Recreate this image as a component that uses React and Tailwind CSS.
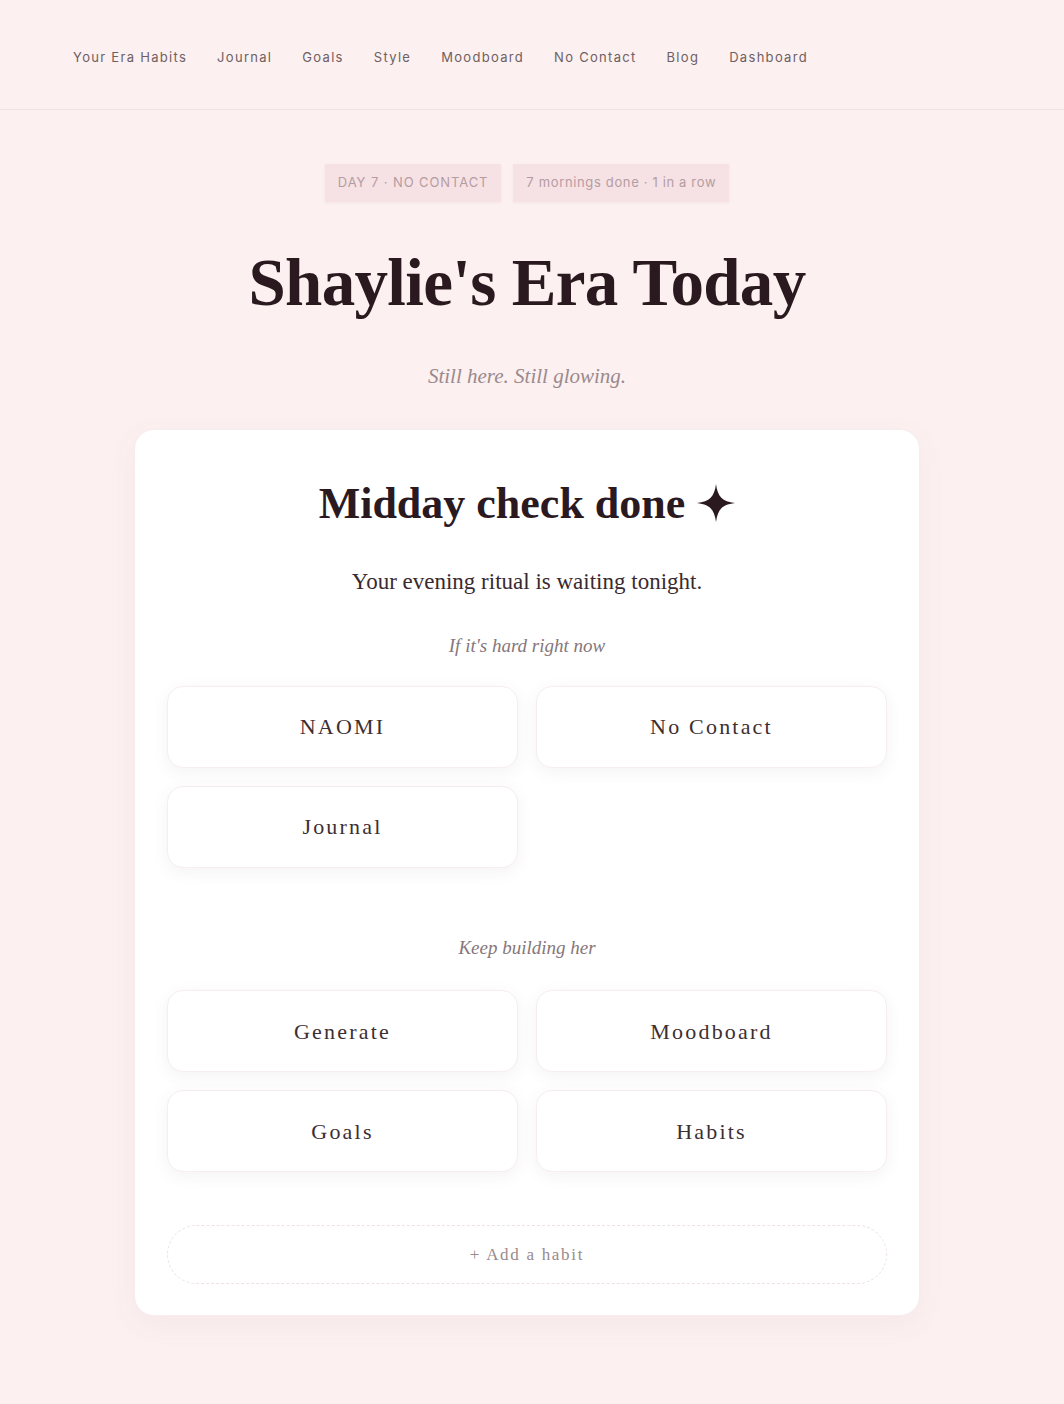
import React from 'react';

const navLinks = ['Your Era Habits', 'Journal', 'Goals', 'Style', 'Moodboard', 'No Contact', 'Blog', 'Dashboard'];

const hardNow = ['NAOMI', 'No Contact', 'Journal'];
const keepBuilding = ['Generate', 'Moodboard', 'Goals', 'Habits'];

const serif = "font-['Liberation_Serif',serif]";

const Sparkle = () => (
  <svg viewBox="0 0 24 24" className="inline-block w-[38px] h-[38px] ml-3 -mt-2 align-middle" fill="#2a1a1f">
    <path d="M12 0 C13 8 16 11 24 12 C16 13 13 16 12 24 C11 16 8 13 0 12 C8 11 11 8 12 0 Z" />
  </svg>
);

const Tile = ({ label }) => (
  <button
    className={`h-[82px] w-full rounded-2xl bg-white border border-[#f6eeee] shadow-[0_4px_16px_rgba(120,80,80,0.07)] text-[22px] tracking-[0.1em] text-[#3d2e32] ${serif}`}
  >
    {label}
  </button>
);

const SectionLabel = ({ children }) => (
  <p className={`text-center italic text-[19px] text-[#86777a] ${serif}`}>{children}</p>
);

export default function App() {
  return (
    <div className="min-h-[1404px] bg-[#fcf0f0] font-['Inter',sans-serif]">
      <nav className="h-[110px] border-b border-[#efe2e2] flex items-center gap-[30px] pl-[73px] pt-[6px]">
        {navLinks.map((link) => (
          <a key={link} className="text-[13px] tracking-[0.1em] text-[#6e5f62]">
            {link}
          </a>
        ))}
      </nav>

      <main className="flex flex-col items-center pt-[54px] pb-[88px] pr-[10px]">
        <div className="flex gap-3">
          <span className="h-[38px] px-[13px] flex items-center bg-[#f6e2e5] text-[13px] tracking-[0.07em] text-[#b59ca1] shadow-[0_1px_3px_rgba(150,100,110,0.08)]">
            DAY 7 · NO CONTACT
          </span>
          <span className="h-[38px] px-[13px] flex items-center bg-[#f6e2e5] text-[13px] tracking-[0.05em] text-[#b59ca1] shadow-[0_1px_3px_rgba(150,100,110,0.08)]">
            7 mornings done · 1 in a row
          </span>
        </div>

        <h1 className={`mt-[38px] text-[67px] leading-[84px] font-bold text-[#2a1a1f] tracking-[-0.01em] ${serif}`}>
          Shaylie's Era Today
        </h1>

        <p className={`mt-[37px] italic text-[21px] text-[#9a8a8d] ${serif}`}>Still here. Still glowing.</p>

        <section className="mt-[36px] w-[786px] bg-white rounded-[20px] border border-[#f7eded] shadow-[0_8px_30px_rgba(150,100,100,0.06)] px-[32px] pt-[46px] pb-[31px]">
          <h2 className={`text-center text-[44px] leading-[56px] font-bold text-[#2a1a1f] ${serif}`}>
            Midday check done
            <Sparkle />
          </h2>

          <p className={`mt-[33px] text-center text-[23px] text-[#3a2a2e] ${serif}`}>
            Your evening ritual is waiting tonight.
          </p>

          <div className="mt-[33px]">
            <SectionLabel>If it's hard right now</SectionLabel>
          </div>

          <div className="mt-[25px] grid grid-cols-2 gap-x-[18px] gap-y-[18px]">
            {hardNow.map((label) => (
              <Tile key={label} label={label} />
            ))}
          </div>

          <div className="mt-[66px]">
            <SectionLabel>Keep building her</SectionLabel>
          </div>

          <div className="mt-[28px] grid grid-cols-2 gap-x-[18px] gap-y-[18px]">
            {keepBuilding.map((label) => (
              <Tile key={label} label={label} />
            ))}
          </div>

          <button
            className={`mt-[53px] h-[59px] w-full rounded-full border border-dashed border-[#ece2e2] text-[17px] tracking-[0.1em] text-[#9a8a8d] ${serif}`}
          >
            + Add a habit
          </button>
        </section>
      </main>
    </div>
  );
}
